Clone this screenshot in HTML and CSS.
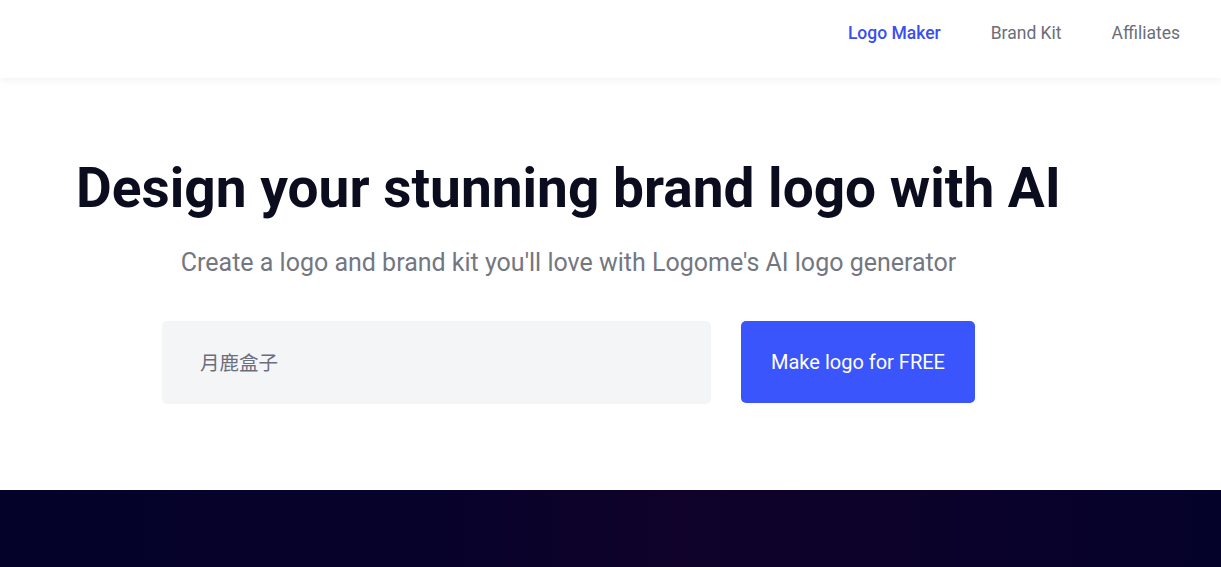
FILE: index.html
```html
<!DOCTYPE html>
<html lang="en">
<head>
<meta charset="utf-8">
<title>Logome</title>
<link rel="stylesheet" href="styles.css">
</head>
<body>
<header class="topbar">
  <nav class="nav">
    <a class="nav-link active" href="#">Logo Maker</a>
    <a class="nav-link" href="#">Brand Kit</a>
    <a class="nav-link" href="#">Affiliates</a>
  </nav>
</header>
<main class="hero">
  <div class="hero-inner">
    <h1 class="title">Design your stunning brand logo with AI</h1>
    <p class="subtitle">Create a logo and brand kit you'll love with Logome's AI logo generator</p>
    <form class="maker">
      <input class="brand-input" type="text" value="月鹿盒子">
      <button class="cta" type="button">Make logo for FREE</button>
    </form>
  </div>
</main>
<section class="dark"></section>
</body>
</html>
```
FILE: styles.css
```css
* { box-sizing: border-box; }
html, body { margin: 0; padding: 0; }
body {
  font-family: Roboto, "Noto Sans CJK SC", sans-serif;
  background: #fff;
  color: #0b0d1f;
  overflow: hidden;
}
.topbar {
  height: 78px;
  background: #fff;
  box-shadow: 0 2px 8px rgba(0,0,0,0.06);
  display: flex;
  justify-content: flex-end;
  align-items: center;
  padding-right: 41px;
  padding-bottom: 11px;
  position: relative;
  z-index: 1;
}
.nav { display: flex; gap: 50px; align-items: center; }
.nav-link {
  font-size: 17.5px;
  color: #6b6e78;
  text-decoration: none;
  line-height: 1;
}
.nav-link.active { color: #3b4ef0; font-weight: 500; }
.hero {
  height: 412px;
  display: flex;
}
.hero-inner {
  width: 1137px;
  text-align: center;
  padding-top: 77px;
}
.title {
  margin: 0;
  font-size: 55px;
  font-weight: 700;
  line-height: 66px;
  color: #0b0d1f;
}
.subtitle {
  margin: 26px 0 0;
  font-size: 25px;
  line-height: 32px;
  color: #737780;
}
.maker {
  margin-top: 42px;
  display: flex;
  justify-content: center;
  gap: 30px;
}
.brand-input {
  width: 549px;
  height: 83px;
  border: none;
  border-radius: 5px;
  background: #f4f5f7;
  padding: 0 38px 2px;
  font-family: "Noto Sans CJK SC", sans-serif;
  font-size: 19.5px;
  color: #6b6e7c;
  outline: none;
}
.cta {
  width: 234px;
  height: 82px;
  border: none;
  border-radius: 5px;
  background: #3a55fb;
  color: #fff;
  font-family: Roboto, sans-serif;
  font-size: 20px;
  font-weight: 400;
  padding-bottom: 2px;
}
.dark {
  height: 77px;
  background: linear-gradient(90deg, #05022a 0%, #07022a 35%, #10022a 55%, #0d022a 70%, #05022a 100%);
}
```
